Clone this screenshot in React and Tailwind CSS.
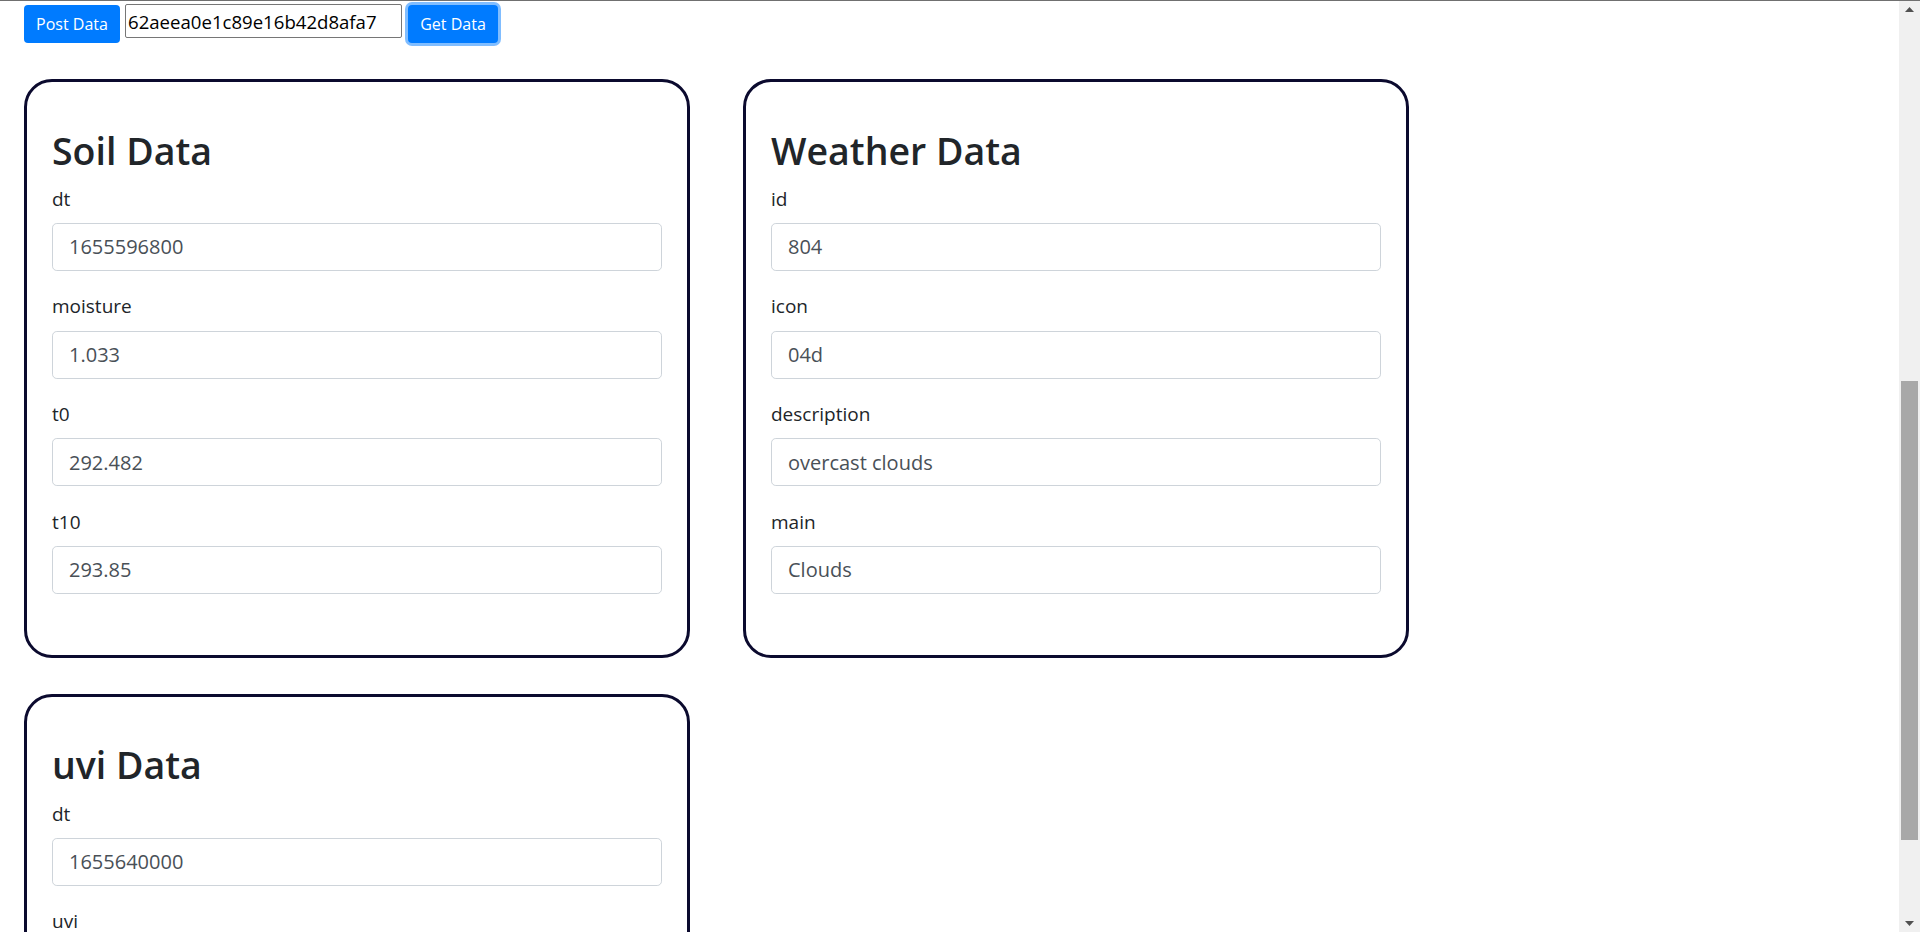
import React from "react";

const cards = [
  {
    title: "Soil Data",
    fields: [
      ["dt", "1655596800"],
      ["moisture", "1.033"],
      ["t0", "292.482"],
      ["t10", "293.85"],
    ],
  },
  {
    title: "Weather Data",
    fields: [
      ["id", "804"],
      ["icon", "04d"],
      ["description", "overcast clouds"],
      ["main", "Clouds"],
    ],
  },
  {
    title: "uvi Data",
    fields: [
      ["dt", "1655640000"],
      ["uvi", "0"],
    ],
  },
];

function DataCard({ title, fields }) {
  return (
    <div className="w-[666px] border-[3px] border-[#0b0a2e] rounded-[28px] bg-white pt-[44.5px] px-[25px] pb-[39.7px]">
      <h1 className="text-[37.5px] leading-[48px] font-semibold text-[#212529] mb-[10.1px]">
        {title}
      </h1>
      {fields.map(([label, value]) => (
        <div key={label} className="mb-[21.27px]">
          <label className="block text-[19px] leading-[28px] text-[#212529] mb-[10.4px]">
            {label}
          </label>
          <input
            readOnly
            defaultValue={value}
            className="block w-full h-[48px] px-[16px] text-[20px] text-[#495057] bg-white border border-[#ced4da] rounded-[4.8px] outline-none"
          />
        </div>
      ))}
    </div>
  );
}

function Scrollbar() {
  return (
    <div className="w-[21px] bg-[#f0f0f0] flex flex-col">
      <div className="h-[17px] flex items-center justify-center">
        <svg width="9" height="5" viewBox="0 0 9 5">
          <polygon points="0,5 9,5 4.5,0" fill="#505050" />
        </svg>
      </div>
      <div className="h-[363px]" />
      <div className="h-[459px] mx-[2px] bg-[#a8a8a8]" />
      <div className="flex-1" />
      <div className="h-[17px] flex items-center justify-center">
        <svg width="9" height="5" viewBox="0 0 9 5">
          <polygon points="0,0 9,0 4.5,5" fill="#505050" />
        </svg>
      </div>
    </div>
  );
}

export default function App() {
  return (
    <div className="w-[1920px] h-[932px] flex flex-col overflow-hidden bg-white font-['Open_Sans',sans-serif]">
      <div className="h-px bg-[#707070]" />
      <div className="flex flex-1 min-h-0">
        <main className="flex-1 overflow-hidden">
          <div className="flex items-start pl-[24px] pt-[3px]">
            <button className="mt-[1px] w-[96px] h-[38px] rounded-[4px] bg-[#007bff] text-white text-[16px] leading-[24px]">
              Post Data
            </button>
            <input
              readOnly
              defaultValue="62aeea0e1c89e16b42d8afa7"
              className="ml-[5px] w-[277px] h-[34px] px-[2px] text-[18.6px] leading-[30px] text-black border border-[#767676] rounded-[2px] outline-none"
            />
            <button className="ml-[6px] mt-[1px] w-[90px] h-[38px] rounded-[4px] bg-[#007bff] text-white text-[16px] leading-[24px] ring-[3px] ring-[#80bdff]">
              Get Data
            </button>
          </div>

          <div className="grid grid-cols-[666px_666px] gap-x-[53px] gap-y-[36px] pl-[24px] mt-[36px] items-start">
            {cards.map((c) => (
              <DataCard key={c.title} {...c} />
            ))}
          </div>
        </main>
        <Scrollbar />
      </div>
    </div>
  );
}
